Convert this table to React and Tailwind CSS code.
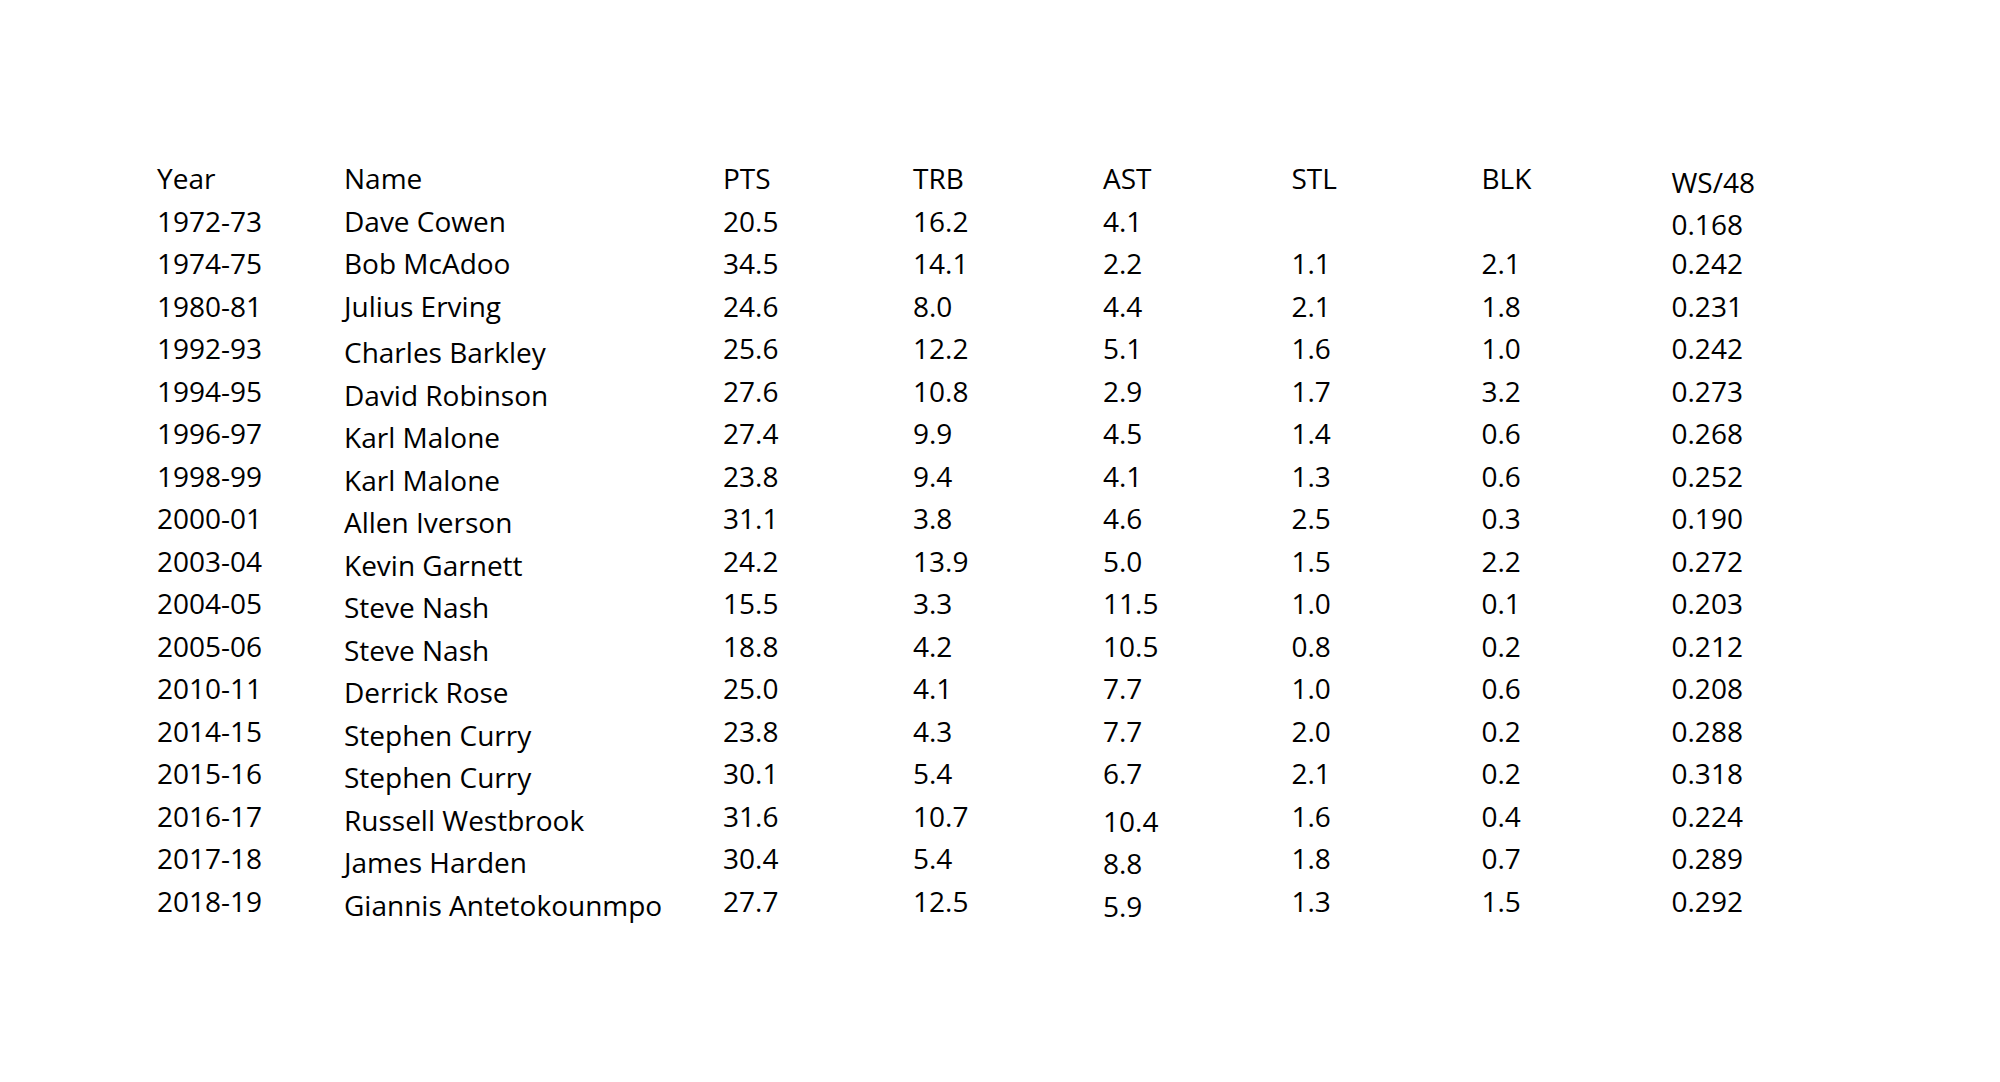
import React from 'react';

const seasons = [
  { year: '1972-73', name: 'Dave Cowen', pts: '20.5', trb: '16.2', ast: '4.1', stl: '', blk: '', ws: '0.168' },
  { year: '1974-75', name: 'Bob McAdoo', pts: '34.5', trb: '14.1', ast: '2.2', stl: '1.1', blk: '2.1', ws: '0.242' },
  { year: '1980-81', name: 'Julius Erving', pts: '24.6', trb: '8.0', ast: '4.4', stl: '2.1', blk: '1.8', ws: '0.231' },
  { year: '1992-93', name: 'Charles Barkley', pts: '25.6', trb: '12.2', ast: '5.1', stl: '1.6', blk: '1.0', ws: '0.242' },
  { year: '1994-95', name: 'David Robinson', pts: '27.6', trb: '10.8', ast: '2.9', stl: '1.7', blk: '3.2', ws: '0.273' },
  { year: '1996-97', name: 'Karl Malone', pts: '27.4', trb: '9.9', ast: '4.5', stl: '1.4', blk: '0.6', ws: '0.268' },
  { year: '1998-99', name: 'Karl Malone', pts: '23.8', trb: '9.4', ast: '4.1', stl: '1.3', blk: '0.6', ws: '0.252' },
  { year: '2000-01', name: 'Allen Iverson', pts: '31.1', trb: '3.8', ast: '4.6', stl: '2.5', blk: '0.3', ws: '0.190' },
  { year: '2003-04', name: 'Kevin Garnett', pts: '24.2', trb: '13.9', ast: '5.0', stl: '1.5', blk: '2.2', ws: '0.272' },
  { year: '2004-05', name: 'Steve Nash', pts: '15.5', trb: '3.3', ast: '11.5', stl: '1.0', blk: '0.1', ws: '0.203' },
  { year: '2005-06', name: 'Steve Nash', pts: '18.8', trb: '4.2', ast: '10.5', stl: '0.8', blk: '0.2', ws: '0.212' },
  { year: '2010-11', name: 'Derrick Rose', pts: '25.0', trb: '4.1', ast: '7.7', stl: '1.0', blk: '0.6', ws: '0.208' },
  { year: '2014-15', name: 'Stephen Curry', pts: '23.8', trb: '4.3', ast: '7.7', stl: '2.0', blk: '0.2', ws: '0.288' },
  { year: '2015-16', name: 'Stephen Curry', pts: '30.1', trb: '5.4', ast: '6.7', stl: '2.1', blk: '0.2', ws: '0.318' },
  { year: '2016-17', name: 'Russell Westbrook', pts: '31.6', trb: '10.7', ast: '10.4', stl: '1.6', blk: '0.4', ws: '0.224' },
  { year: '2017-18', name: 'James Harden', pts: '30.4', trb: '5.4', ast: '8.8', stl: '1.8', blk: '0.7', ws: '0.289' },
  { year: '2018-19', name: 'Giannis Antetokounmpo', pts: '27.7', trb: '12.5', ast: '5.9', stl: '1.3', blk: '1.5', ws: '0.292' },
];

const rowClass = 'grid grid-cols-[187px_379px_190px_190px_188.5px_190px_190px_190px] h-[42.5px] leading-[42.5px]';

export default function App() {
  return (
    <div
      className="w-[2000px] h-[1082px] bg-white text-black pt-[157px] pl-[157px] text-[28px]"
      style={{ fontFamily: '"Open Sans", "Noto Sans", sans-serif' }}
    >
      <div className={rowClass}>
        <div>Year</div>
        <div>Name</div>
        <div>PTS</div>
        <div>TRB</div>
        <div>AST</div>
        <div>STL</div>
        <div>BLK</div>
        <div className="translate-y-[4px]">WS/48</div>
      </div>
      {seasons.map((s, i) => (
        <div key={s.year} className={rowClass}>
          <div>{s.year}</div>
          <div className={i >= 3 ? 'translate-y-[4px]' : ''}>{s.name}</div>
          <div>{s.pts}</div>
          <div>{s.trb}</div>
          <div className={i >= 14 ? 'translate-y-[5px]' : ''}>{s.ast}</div>
          <div>{s.stl}</div>
          <div>{s.blk}</div>
          <div className={i === 0 ? 'translate-y-[3px]' : ''}>{s.ws}</div>
        </div>
      ))}
    </div>
  );
}
